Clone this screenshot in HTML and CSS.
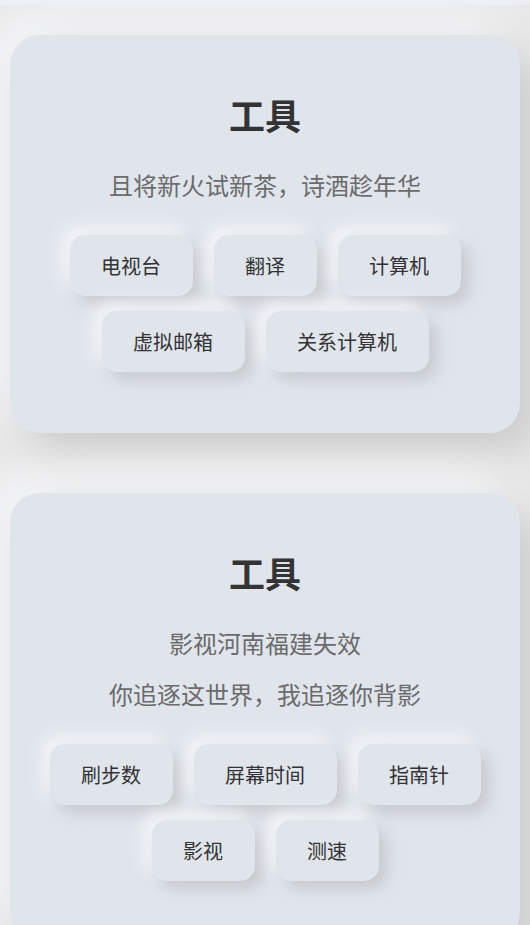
FILE: index.html
```html
<!DOCTYPE html>
<html lang="zh">
<head>
<meta charset="utf-8">
<link rel="stylesheet" href="styles.css">
</head>
<body>
<div class="strip"></div>
<main class="page">
  <section class="card">
    <h1 class="title">工具</h1>
    <p class="sub">且将新火试新茶，诗酒趁年华</p>
    <div class="btns">
      <div class="btn">电视台</div>
      <div class="btn">翻译</div>
      <div class="btn">计算机</div>
      <div class="btn">虚拟邮箱</div>
      <div class="btn">关系计算机</div>
    </div>
  </section>
  <section class="card">
    <h1 class="title">工具</h1>
    <p class="sub">影视河南福建失效</p>
    <p class="sub sub2">你追逐这世界，我追逐你背影</p>
    <div class="btns">
      <div class="btn">刷步数</div>
      <div class="btn">屏幕时间</div>
      <div class="btn">指南针</div>
      <div class="btn">影视</div>
      <div class="btn">测速</div>
    </div>
  </section>
</main>
</body>
</html>
```
FILE: styles.css
```css
html, body {
  margin: 0;
  padding: 0;
}
body {
  background: #e8e8e9;
  font-family: "Noto Sans CJK SC", "Noto Sans", sans-serif;
  overflow: hidden;
  height: 925px;
}
.strip {
  height: 5px;
  background: #ecedf7;
}
.page {
  padding: 30px 10px 0;
  display: flex;
  flex-direction: column;
  gap: 60px;
}
.card {
  background: #e0e5ec;
  border-radius: 30px;
  padding: 58px 20px 61px;
  box-shadow: 18px 18px 40px #cbcbcb, -18px -18px 40px #f6f7f9;
  text-align: center;
}
.title {
  margin: 0;
  font-size: 36px;
  line-height: 43px;
  font-weight: 700;
  color: #333333;
}
.sub {
  margin: 31px 0 0;
  font-size: 24px;
  line-height: 36px;
  color: #6b6b6b;
}
.sub2 {
  margin-top: 15px;
}
.btns {
  margin-top: 32px;
  display: flex;
  flex-wrap: wrap;
  justify-content: center;
  gap: 15px 21px;
}
.btn {
  height: 61px;
  line-height: 61px;
  padding: 0 31.5px;
  border-radius: 15px;
  background: #e0e5ec;
  font-size: 20px;
  color: #333333;
  box-shadow: 8px 8px 16px #c6c9ce, -8px -8px 16px #f3f5f8;
}
```
